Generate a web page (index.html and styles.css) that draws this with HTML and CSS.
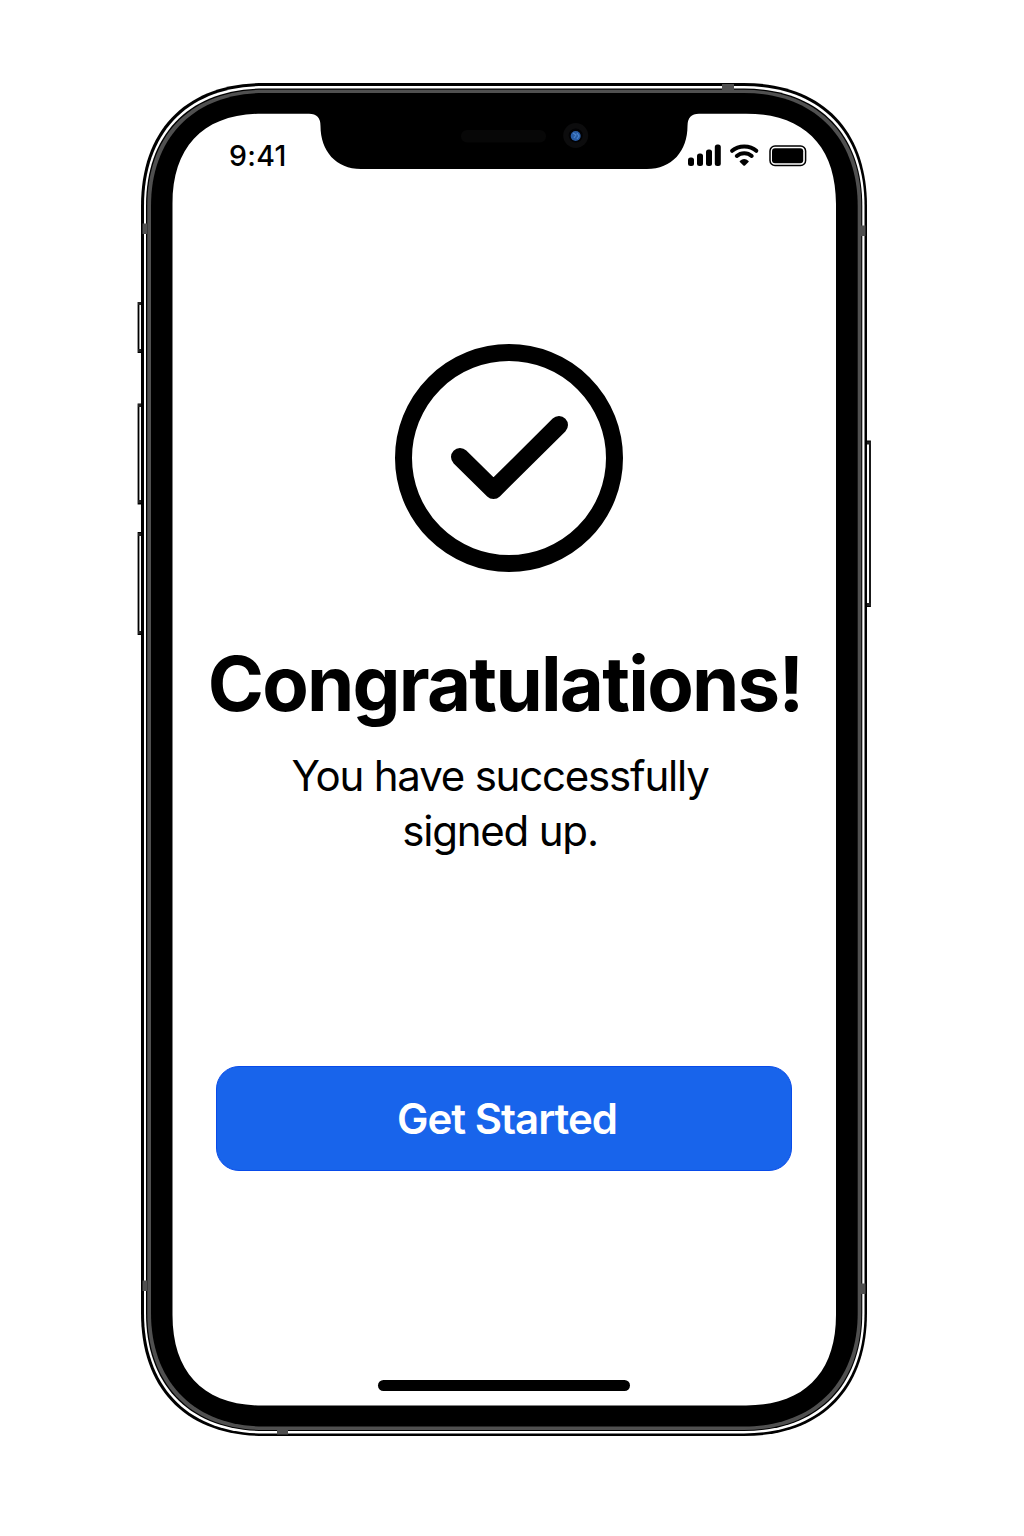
FILE: index.html
```html
<!DOCTYPE html>
<html lang="en">
<head>
<meta charset="utf-8">
<title>Congratulations</title>
<link rel="stylesheet" href="styles.css">
</head>
<body>
<div class="stage">
  <svg class="device" viewBox="0 0 1024 1536" aria-hidden="true">
    <!-- side buttons -->
    <g class="side-buttons">
      <path d="M142 303H138.500V352H142M142 404.500H138.500V503.500H142M142 533H138.500V634H142"/>
      <path d="M866 441.500H870V606H866"/>
      <path class="button-caps" d="M138 303.500H142M138 350.500H142M138 405.500H142M138 501.500H142M138 534.500H142M138 632.500H142M866 443H871M866 604.500H871"/>
    </g>
    <!-- frame, bezel and screen -->
    <path d="M264 83H744C821 83 867 129 867 206V1313C867 1390 821 1436 744 1436H264C187 1436 141 1390 141 1313V206C141 129 187 83 264 83Z"/>
    <path fill="#fff" d="M264 86H744C819 86 864.500 131 864.500 206V1313C864.500 1388 819 1433.500 744 1433.500H264C189 1433.500 144 1388 144 1313V206C144 131 189 86 264 86Z"/>
    <path d="M264 88.500H744C817.500 88.500 862.300 133 862.300 206V1313C862.300 1386 817.500 1431 744 1431H264C190.500 1431 146 1386 146 1313V206C146 133 190.500 88.500 264 88.500Z"/>
    <path fill="#505050" d="M264 89.700H744C816.500 89.700 861.300 134 861.300 206V1313C861.300 1385 816.500 1430 744 1430H264C191.500 1430 147.300 1385 147.300 1313V206C147.300 134 191.500 89.700 264 89.700Z"/>
    <path d="M264 93H744C813.500 93 857.700 137 857.700 206V1313C857.700 1382 813.500 1426.500 744 1426.500H264C194.500 1426.500 151 1382 151 1313V206C151 137 194.500 93 264 93Z"/>
    <path fill="#fff" d="M262 113.700H309Q320.500 113.700 320.500 126C320.500 151 336 169 361 169H647C672 169 687.500 151 687.500 126Q687.500 113.700 699 113.700H746C804 113.700 836 146 836 204V1315C836 1373 804 1405.500 746 1405.500H262C204 1405.500 172.500 1373 172.500 1315V204C172.500 146 204 113.700 262 113.700Z"/>
    <!-- antenna bands -->
    <g fill="#505050">
      <path d="M722 84H734V90H722ZM277 1429H288V1434.500H277ZM142.500 223.500H147V234H142.500ZM861 225.500H865.500V236H861ZM142.500 1280.500H147V1291H142.500ZM861 1283.500H865.500V1294H861Z"/>
    </g>
    <!-- speaker and camera -->
    <rect x="461" y="130" width="85" height="12.500" rx="6" fill="#070707"/>
    <circle cx="575.700" cy="135.500" r="12.500" fill="#0c0c0d"/>
    <circle cx="575.700" cy="135.500" r="7" fill="#020204"/>
    <circle cx="575.700" cy="136" r="5" fill="#285ba3"/>
    <path d="M573 133L576 135L574 138M577 133L579 136L577 139" fill="none" stroke="#4a84cc" stroke-width="1.200"/>
  </svg>

  <div class="screen">
    <header class="status-bar">
      <span class="time">9:41</span>
      <svg class="status-icons" width="120" height="26" viewBox="0 0 120 26" aria-hidden="true">
        <rect x="0" y="14.500" width="6" height="8.500" rx="2.500"/>
        <rect x="9" y="10.500" width="6" height="12.500" rx="2.500"/>
        <rect x="18" y="6.500" width="6" height="16.500" rx="2.500"/>
        <rect x="26.800" y="1.500" width="6" height="21.500" rx="2.500"/>
        <g fill="none" stroke="#000" stroke-linecap="round">
          <path stroke-width="4" d="M44.100 7.800C50.500 1.900 62 1.900 68.300 7.800"/>
          <path stroke-width="4" d="M48.800 13C53 9.200 59.500 9.200 63.700 13"/>
        </g>
        <path d="M51.800 18Q56.200 14.200 60.600 18Q61 18.500 60.500 19L57 22.400Q56.200 23 55.400 22.400L51.900 19Q51.400 18.500 51.800 18Z"/>
        <rect x="82" y="3" width="35.600" height="19.500" rx="5" fill="none" stroke="#000" stroke-width="1.500"/>
        <rect x="84" y="5.200" width="31.200" height="15.100" rx="3"/>
      </svg>
    </header>

    <main class="content">
      <svg class="check" width="228" height="228" viewBox="0 0 228 228" aria-hidden="true">
        <circle cx="114" cy="114" r="105.500"/>
        <path d="M65 113L98.500 146L164 81"/>
      </svg>
      <h1 class="title">Congratulations!</h1>
      <p class="message">You have successfully<br>signed up.</p>
      <button class="cta" type="button"><span class="cta-label">Get Started</span></button>
    </main>
    <div class="home-indicator"></div>
  </div>
</div>
</body>
</html>
```

FILE: styles.css
```css
* {
  box-sizing: border-box;
}

body {
  margin: 0;
  background: #fff;
  color: #000;
  font-family: Inter, "Liberation Sans", sans-serif;
}

.stage {
  position: relative;
  width: 1024px;
  height: 1536px;
  padding: 114px 188px 130px 172px;
}

.device {
  position: absolute;
  inset: 0;
  width: 1024px;
  height: 1536px;
}

.side-buttons {
  fill: none;
  stroke: #000;
  stroke-width: 1.8;
}

.button-caps {
  stroke: #222;
  stroke-width: 3;
}

.screen {
  position: relative;
  display: flex;
  flex-direction: column;
  align-items: center;
  width: 664px;
  height: 1291px;
}

.status-bar {
  display: flex;
  justify-content: space-between;
  align-items: center;
  width: 100%;
  height: 84px;
  padding: 0 28px 0 57px;
}

.time {
  font-size: 28.500px;
  font-weight: 500;
  line-height: 34px;
  letter-spacing: 0.300px;
}

.status-icons {
  display: block;
}

.content {
  display: flex;
  flex-direction: column;
  align-items: center;
  width: 100%;
}

.check {
  display: block;
  margin: 146px 0 0 10px;
  fill: none;
  stroke: #000;
  stroke-width: 17;
}

.check path {
  stroke-width: 18;
  stroke-linecap: round;
  stroke-linejoin: round;
}

.title {
  margin: 66px 0 0 2px;
  font-size: 76px;
  font-weight: 700;
  line-height: 90px;
  letter-spacing: -1.750px;
  white-space: nowrap;
}

.message {
  margin: 20px 8px 0 0;
  font-size: 42px;
  line-height: 55px;
  letter-spacing: -1.200px;
  text-align: center;
  white-space: nowrap;
}

.cta {
  width: 576px;
  height: 105px;
  margin: 208px 0 0;
  padding: 0 0 0 6px;
  border: 1px solid #084bea;
  border-radius: 23px;
  background: #1864eb;
  color: #fff;
  font: 600 42px/56px Inter, "Liberation Sans", sans-serif;
}

.cta-label {
  letter-spacing: -1px;
}

.home-indicator {
  width: 252px;
  height: 11px;
  margin: auto 0 14px;
  border-radius: 6px;
  background: #000;
}
```
